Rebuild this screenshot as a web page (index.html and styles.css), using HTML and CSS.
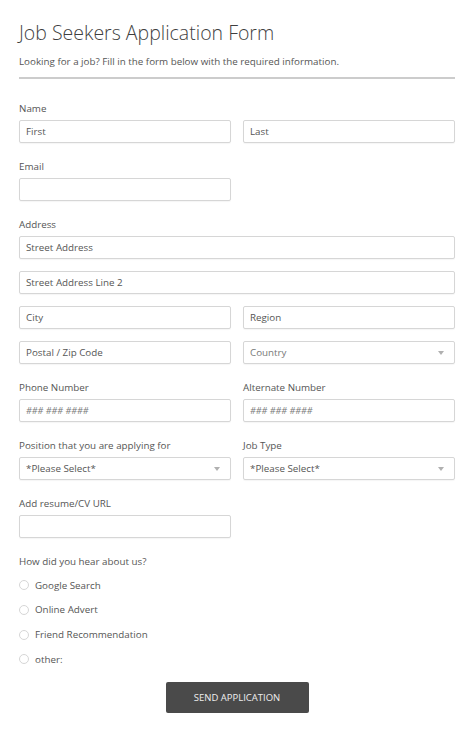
FILE: index.html
```html
<!DOCTYPE html>
<html>
<head>
<meta charset="utf-8">
<link rel="stylesheet" href="styles.css">
</head>
<body>
<form class="form">
  <h1 class="title">Job Seekers Application Form</h1>
  <p class="subtitle">Looking for a job? Fill in the form below with the required information.</p>
  <div class="rule"></div>

  <div class="field">
    <div class="label">Name</div>
    <div class="row">
      <div class="input"><span class="ph">First</span></div>
      <div class="input"><span class="ph">Last</span></div>
    </div>
  </div>

  <div class="field">
    <div class="label">Email</div>
    <div class="row">
      <div class="input"></div>
    </div>
  </div>

  <div class="field">
    <div class="label">Address</div>
    <div class="stack">
      <div class="input"><span class="ph">Street Address</span></div>
      <div class="input"><span class="ph">Street Address Line 2</span></div>
      <div class="row">
        <div class="input"><span class="ph">City</span></div>
        <div class="input"><span class="ph">Region</span></div>
      </div>
      <div class="row">
        <div class="input"><span class="ph">Postal / Zip Code</span></div>
        <div class="input select"><span class="ph muted">Country</span><svg class="arrow" width="6" height="4" viewBox="0 0 6 4"><path d="M0 0H6L3 4Z" fill="#b0b0b0"/></svg></div>
      </div>
    </div>
  </div>

  <div class="field">
    <div class="row">
      <div class="col">
        <div class="label">Phone Number</div>
        <div class="input"><span class="ph hash">### ### ####</span></div>
      </div>
      <div class="col">
        <div class="label">Alternate Number</div>
        <div class="input"><span class="ph hash">### ### ####</span></div>
      </div>
    </div>
  </div>

  <div class="field">
    <div class="row">
      <div class="col">
        <div class="label">Position that you are applying for</div>
        <div class="input select"><span class="ph">*Please Select*</span><svg class="arrow" width="6" height="4" viewBox="0 0 6 4"><path d="M0 0H6L3 4Z" fill="#b0b0b0"/></svg></div>
      </div>
      <div class="col">
        <div class="label">Job Type</div>
        <div class="input select"><span class="ph">*Please Select*</span><svg class="arrow" width="6" height="4" viewBox="0 0 6 4"><path d="M0 0H6L3 4Z" fill="#b0b0b0"/></svg></div>
      </div>
    </div>
  </div>

  <div class="field">
    <div class="label">Add resume/CV URL</div>
    <div class="row">
      <div class="input"></div>
    </div>
  </div>

  <div class="field radios">
    <div class="label">How did you hear about us?</div>
    <div class="radio"><span class="dot"></span>Google Search</div>
    <div class="radio"><span class="dot"></span>Online Advert</div>
    <div class="radio"><span class="dot"></span>Friend Recommendation</div>
    <div class="radio"><span class="dot"></span>other:</div>
  </div>

  <div class="actions">
    <button type="button" class="btn">SEND APPLICATION</button>
  </div>
</form>
</body>
</html>
```

FILE: styles.css
```css
html, body {
  margin: 0;
  padding: 0;
  background: #fff;
}
body {
  font-family: "Open Sans", "Liberation Sans", sans-serif;
  color: #555;
}
.form {
  width: 436px;
  padding: 19px 19px 0 19px;
}
.title {
  margin: 0;
  font-size: 19.5px;
  line-height: 28px;
  font-weight: 300;
  color: #3f3f3f;
}
.subtitle {
  margin: 8px 0 0 0;
  font-size: 9.8px;
  line-height: 14px;
  color: #555;
}
.rule {
  margin-top: 8px;
  height: 2px;
  background: #ccc;
  margin-bottom: 23px;
}
.field {
  margin-bottom: 17px;
}
.label {
  font-size: 9.8px;
  line-height: 14px;
  height: 14px;
  margin-bottom: 4px;
  color: #555;
  white-space: nowrap;
}
.row {
  display: grid;
  grid-template-columns: 1fr 1fr;
  column-gap: 12px;
}
.col {
  min-width: 0;
}
.stack {
  display: flex;
  flex-direction: column;
  gap: 12px;
}
.input {
  box-sizing: border-box;
  height: 23px;
  border: 1px solid #d6d6d6;
  border-radius: 2px;
  box-shadow: 0 1px 1px rgba(0,0,0,0.04);
  background: #fff;
  display: flex;
  align-items: center;
  padding: 0 6px;
  min-width: 0;
}
.ph {
  font-size: 9.8px;
  color: #555;
  white-space: nowrap;
}
.ph.muted {
  color: #777;
}
.ph.hash {
  font-style: italic;
  font-size: 9px;
  color: #777;
}
.select {
  justify-content: space-between;
  padding-right: 10px;
}
.arrow {
  display: block;
}
.radios .label {
  margin-bottom: 9px;
}
.radio {
  display: flex;
  align-items: center;
  height: 14px;
  margin-bottom: 10.8px;
  font-size: 9.8px;
  color: #555;
}
.dot {
  box-sizing: border-box;
  width: 10px;
  height: 10px;
  border: 1px solid #d6d6d6;
  border-radius: 50%;
  margin-right: 6px;
  background: #fff;
}
.actions {
  display: flex;
  justify-content: center;
  margin-top: -1px;
}
.btn {
  width: 143px;
  height: 31px;
  border: none;
  border-radius: 2px;
  background: #4a4a4a;
  color: #eee;
  font-family: "Open Sans", "Liberation Sans", sans-serif;
  font-size: 9.5px;
  letter-spacing: 0;
  padding: 0;
}
```
